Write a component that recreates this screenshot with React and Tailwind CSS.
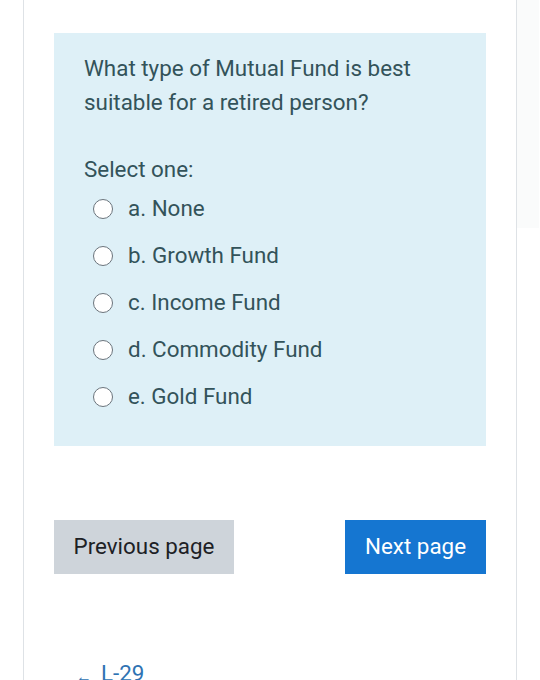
import React from "react"

const options = ["a. None", "b. Growth Fund", "c. Income Fund", "d. Commodity Fund", "e. Gold Fund"]

const App = () => {
  return (
    <div className="flex h-[680px] w-[540px] overflow-hidden bg-white font-['Roboto',sans-serif]">
      <div className="w-[23px] shrink-0" />
      <div className="w-[494px] shrink-0 border-x border-[#dee2e6] px-[30px] pt-[33px]">
        <div className="bg-[#def0f7] px-[30px] pt-[18px] pb-[26px] text-[22.4px] text-[#33535a]">
          <p className="leading-[34px]">
            What type of Mutual Fund is best suitable for a retired person?
          </p>
          <p className="mt-[33px] leading-[34px]">Select one:</p>
          <div className="-mt-px flex flex-col">
            {options.map((opt) => (
              <label key={opt} className="flex h-[47px] items-center pl-[9px]">
                <span className="h-[20px] w-[20px] rounded-full border-[1.5px] border-[#6b747c] bg-white" />
                <span className="ml-[15px]">{opt}</span>
              </label>
            ))}
          </div>
        </div>
        <div className="mt-[74px] flex justify-between">
          <button className="h-[54px] w-[180px] bg-[#ced4da] text-[22.4px] text-[#1d2125]">Previous page</button>
          <button className="h-[54px] w-[141px] bg-[#1576d1] text-[22.4px] text-white">Next page</button>
        </div>
        <div className="mt-[80px] flex items-center pl-[22px] text-[22.4px] leading-[30px] text-[#2f73b3]">
          <span className="mr-[9px] mt-[8px] text-[16px]">←</span>
          <span>L-29</span>
        </div>
      </div>
      <div className="h-[228px] w-[22px] shrink-0 bg-[#fafbfb]" />
    </div>
  )
}

export default App
